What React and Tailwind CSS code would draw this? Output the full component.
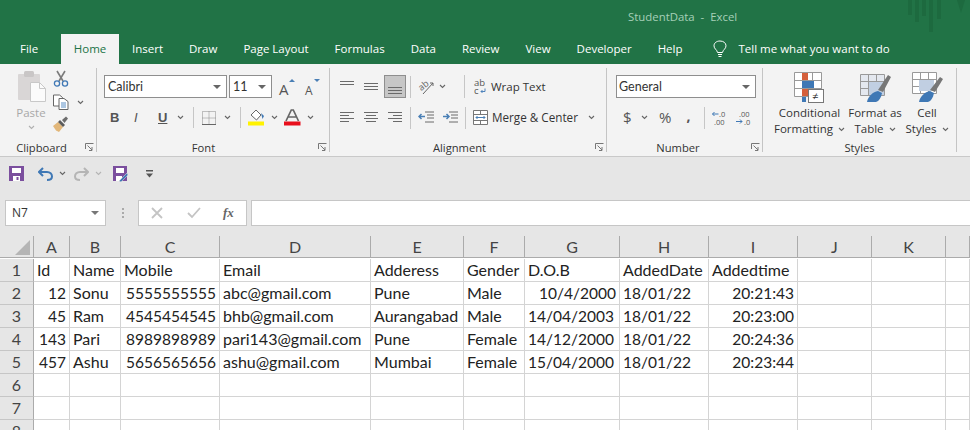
import React from "react";

const Chev = ({ ml = 0, c = "#666" }) => (
  <svg width="7" height="5" viewBox="0 0 7 5" className="shrink-0" style={{ marginLeft: ml }}>
    <path d="M1 1l2.500 2.500L6 1" fill="none" stroke={c} strokeWidth="1.100" />
  </svg>
);
const Sep = ({ ml = 0, h = 23 }) => <div className="w-px bg-[#c6c6c6] shrink-0" style={{ marginLeft: ml, height: h }} />;
const Launcher = () => (
  <svg width="9" height="9" viewBox="0 0 9 9" className="shrink-0">
    <path d="M.5 6V.5H8.500M2.500 2.500L7 7M7 4v3.500H4" fill="none" stroke="#777" strokeWidth="1" />
  </svg>
);
const Lines = ({ rows, w = 14 }) => (
  <svg width={w} height="13" viewBox={`0 0 ${w} 13`} className="shrink-0">
    {rows.map(([x, y, l], i) => <rect key={i} x={x} y={y} width={l} height="1" fill="#6a6a6a" />)}
  </svg>
);
const Dd = ({ className = "" }) => <div className={`w-0 h-0 border-x-[4px] border-x-transparent border-t-[4px] border-t-[#666] ${className}`} />;

function Group({ width, label, labelClass = "justify-center", launcher, children }) {
  return (
    <div className="h-[92px] shrink-0 flex flex-col relative" style={{ width }}>
      <div className="h-[75px] flex flex-col">{children}</div>
      <div className={`flex-1 flex items-center text-[11.2px] leading-none text-[#333] ${labelClass}`}>{label}</div>
      {launcher && <div className="absolute right-[3px] bottom-[4px]"><Launcher /></div>}
      <div className="absolute right-0 top-[4px] w-px h-[84px] bg-[#c4c4c4]" />
    </div>
  );
}

const tabs = ["Insert", "Draw", "Page Layout", "Formulas", "Data", "Review", "View", "Developer", "Help"];

const cols = ["A", "B", "C", "D", "E", "F", "G", "H", "I", "J", "K", ""];
const R = (t) => ({ t, r: true });
const N = (t) => ({ t, n: true });
const data = [
  ["Id", "Name", "Mobile", "Email", "Adderess", "Gender", "D.O.B", "AddedDate", "Addedtime"],
  [R("12"), "Sonu", R("5555555555"), "abc@gmail.com", "Pune", "Male", R("10/4/2000"), N("18/01/22"), R("20:21:43")],
  [R("45"), "Ram", R("4545454545"), "bhb@gmail.com", "Aurangabad", "Male", N("14/04/2003"), N("18/01/22"), R("20:23:00")],
  [R("143"), "Pari", R("8989898989"), "pari143@gmail.com", "Pune", "Female", N("14/12/2000"), N("18/01/22"), R("20:24:36")],
  [R("457"), "Ashu", R("5656565656"), "ashu@gmail.com", "Mumbai", "Female", N("15/04/2000"), N("18/01/22"), R("20:23:44")],
  [], [], [],
];

export default function App() {
  return (
    <div className="w-[970px] h-[430px] overflow-hidden bg-[#e6e6e6] font-['Open_Sans',sans-serif] relative">
      {/* Title bar */}
      <div className="h-[64px] bg-[#217346] relative">
        <div className="h-[34px] pl-[628px] flex items-center text-[11.4px] text-[#a6d0b8] whitespace-pre">StudentData  -  Excel</div>
        <svg width="70" height="34" viewBox="0 0 70 34" className="absolute left-[900px] top-0">
          <g fill="#1d6a3f">
            <rect x="8" width="4" height="15" /><rect x="15" width="4" height="22" /><rect x="22" width="4" height="16" />
            <rect x="29" width="4" height="32" /><rect x="37" width="4" height="19" />
            <path d="M57 0h8l-4 13z" />
          </g>
        </svg>
        <div className="h-[30px] flex items-end text-[11.5px] text-white">
          <div className="h-[30px] flex items-center ml-[20px] w-[41px]">File</div>
          <div className="h-[30px] w-[58px] bg-[#f3f3f3] text-[#217346] flex items-center justify-center">Home</div>
          {tabs.map((t) => (
            <div key={t} className="h-[30px] flex items-center px-[13px]">{t}</div>
          ))}
          <div className="h-[30px] flex items-center ml-[17px] gap-[12px]">
            <svg width="14" height="18" viewBox="0 0 14 18"><path d="M4.500 12.500C4 9.500 1 9 1 5.800 1 3 3.500 1 7 1s6 2 6 4.800c0 3.200-3 3.700-3.500 6.700zM5 14.500h4M5.500 16.500h3" fill="none" stroke="#fff" strokeWidth="1" /></svg>
            <span>Tell me what you want to do</span>
          </div>
        </div>
      </div>

      {/* Ribbon */}
      <div className="h-[93px] bg-[#f3f3f3] border-b border-[#c9c9c9] flex">
        <Group width={97} label={<span className="pr-[14px]">Clipboard</span>} launcher>
          <div className="flex pl-[14px] pt-[6px]">
            <div className="w-[34px] flex flex-col items-center">
              <svg width="32" height="32" viewBox="0 0 32 32">
                <rect x="3" y="4" width="22" height="26" rx="1" fill="#d9d6d6" />
                <rect x="9" y="1" width="10" height="6" rx="1.500" fill="#c9c6c6" />
                <path d="M15.500 12.500h9l6 6v13h-15z" fill="#fbfbfb" stroke="#c8c8c8" />
                <path d="M24.500 12.500v6h6" fill="none" stroke="#c8c8c8" />
              </svg>
              <div className="text-[11.5px] text-[#a8a8a8] leading-none mt-[5px]">Paste</div>
              <div className="mt-[6px]"><Chev c="#b0b0b0" /></div>
            </div>
            <div className="flex flex-col ml-[5px]">
              <svg width="16" height="17" viewBox="0 0 16 17">
                <path d="M4 1l6 10M12 1L6 11" stroke="#7b7b7b" strokeWidth="1.600" fill="none" />
                <circle cx="4" cy="13.500" r="2.600" fill="none" stroke="#3f78b5" strokeWidth="1.300" />
                <circle cx="12" cy="13.500" r="2.600" fill="none" stroke="#3f78b5" strokeWidth="1.300" />
              </svg>
              <div className="flex items-center mt-[7px]">
                <svg width="16" height="16" viewBox="0 0 16 16">
                  <path d="M.5 1h6l3 2.500v8.500h-9z" fill="#fff" stroke="#666" />
                  <path d="M6 4.500h5l4 3v8H6z" fill="#fff" stroke="#666" />
                  <path d="M8 9h5M8 11h5M8 13h5" stroke="#5b8ec4" />
                </svg>
                <Chev ml={8} />
              </div>
              <svg width="17" height="16" viewBox="0 0 17 16" className="mt-[6px] -ml-[1px]">
                <path d="M1 10l5-4 5 5-4 5-3-1.500z" fill="#e2b77a" />
                <path d="M6 6l2-2 5 5-2 2z" fill="#5c5c5c" />
                <path d="M10 4l4-3.500 2 2L12.500 7z" fill="#6d6d6d" />
              </svg>
            </div>
          </div>
        </Group>

        <Group width={233} label={<span className="pr-[20px]">Font</span>} launcher>
          <div className="flex items-center pl-[7px] pt-[11px] font-['Lato',sans-serif] text-[12.5px] text-[#333]">
            <div className="w-[123px] h-[23px] bg-white border border-[#8e8e8e] flex items-center justify-between pt-[1px] pl-[3px] pr-[5px]">Calibri<Dd /></div>
            <div className="w-[43px] h-[23px] ml-[2px] bg-white border border-[#8e8e8e] flex items-center justify-between pt-[1px] pl-[3px] pr-[5px]">11<Dd /></div>
            <svg width="16" height="17" viewBox="0 0 16 17" className="ml-[7px] mt-[1px] overflow-visible"><text x="0" y="16" fontSize="15" fill="#555" fontFamily="Open Sans">A</text><path d="M10 3l3-3 3 3z" fill="#4a7fb5" /></svg>
            <svg width="16" height="17" viewBox="0 0 16 17" className="ml-[10px] mt-[1px] overflow-visible"><text x="0" y="16" fontSize="12" fill="#555" fontFamily="Open Sans">A</text><path d="M9 0h6l-3 3z" fill="#4a7fb5" /></svg>
          </div>
          <div className="flex items-center pl-[13px] mt-[8px] h-[23px] text-[#555] text-[13px] font-['Liberation_Sans',sans-serif]">
            <span className="font-bold w-[10px]">B</span>
            <span className="italic ml-[14px] w-[8px]">I</span>
            <span className="underline ml-[16px] w-[10px] font-bold">U</span>
            <Chev ml={9} />
            <Sep ml={9} h={21} />
            <svg width="14" height="14" viewBox="0 0 14 14" className="ml-[8px]">
              <path d="M.5.5h13v13H.5zM7 .5v13M.5 7h13" fill="none" stroke="#888" strokeDasharray="1 1" />
              <path d="M0 13.500h14" stroke="#666" />
            </svg>
            <Chev ml={8} />
            <Sep ml={9} h={21} />
            <svg width="17" height="17" viewBox="0 0 17 17" className="ml-[7px]">
              <path d="M3 6l5-5 5 5-4.500 5z" fill="#fff" stroke="#666" />
              <path d="M13 4l3 3-1.500 3z" fill="#3f78b5" />
              <rect x="0" y="12.500" width="16" height="4" fill="#fff200" />
            </svg>
            <Chev ml={6} />
            <svg width="17" height="17" viewBox="0 0 17 17" className="ml-[6px]">
              <path d="M2 12L7.300 1h2L14.500 12M4.500 8h7.500" fill="none" stroke="#666" strokeWidth="1.700" />
              <rect x="0" y="12.500" width="16.500" height="4" fill="#e80f1c" />
            </svg>
            <Chev ml={6} />
          </div>
        </Group>

        <Group width={277} label={<span className="pr-[18px]">Alignment</span>} launcher>
          <div className="flex items-center pl-[10px] pt-[11px] h-[34px] text-[#333]">
            <Lines rows={[[0, 1, 14], [0, 4, 14]]} />
            <div className="ml-[10px]"><Lines rows={[[0, 3, 14], [0, 6, 14], [0, 9, 14]]} /></div>
            <div className="ml-[6px] w-[22px] h-[23px] bg-[#c6c6c6] border border-[#8e8e8e] flex items-end justify-center pb-[1px]">
              <Lines rows={[[0, 4, 14], [0, 7, 14], [0, 10, 14]]} />
            </div>
            <Sep ml={4} h={22} />
            <svg width="16" height="16" viewBox="0 0 16 16" className="ml-[7px] overflow-visible">
              <text x="0" y="9" fontSize="9" fill="#666" transform="rotate(-40 6 6)" fontFamily="Open Sans">ab</text>
              <path d="M5 15L15 4M15 4h-3M15 4v3" stroke="#666" fill="none" />
            </svg>
            <Chev ml={5} />
            <Sep ml={18} h={23} />
            <svg width="14" height="15" viewBox="0 0 14 15" className="ml-[9px] overflow-visible">
              <text x="0" y="7" fontSize="9.500" fill="#555" fontFamily="Open Sans">ab</text>
              <text x="0" y="14.500" fontSize="9.500" fill="#555" fontFamily="Open Sans">c</text>
              <path d="M11 9.500v3H7M8.500 11L7 12.500 8.500 14" fill="none" stroke="#3f78b5" strokeWidth=".9" />
            </svg>
            <span className="ml-[3px] text-[11.5px]">Wrap Text</span>
          </div>
          <div className="flex items-center pl-[10px] mt-[8px] h-[23px] text-[#333]">
            <Lines rows={[[0, 1, 14], [0, 4, 9], [0, 7, 14], [0, 10, 9]]} />
            <div className="ml-[10px]"><Lines rows={[[0, 1, 14], [2, 4, 10], [0, 7, 14], [2, 10, 10]]} /></div>
            <div className="ml-[10px]"><Lines rows={[[0, 1, 14], [5, 4, 9], [0, 7, 14], [5, 10, 9]]} /></div>
            <Sep ml={8} h={22} />
            <svg width="16" height="13" viewBox="0 0 16 13" className="ml-[7px]">
              <path d="M7 1h9M9 4h7M9 7h7M7 11h9" stroke="#6a6a6a" /><path d="M7 5.500H1M3.500 3L1 5.500 3.500 8" stroke="#4a7fb5" strokeWidth="1.500" fill="none" />
            </svg>
            <svg width="16" height="13" viewBox="0 0 16 13" className="ml-[8px]">
              <path d="M7 1h9M9 4h7M9 7h7M7 11h9" stroke="#6a6a6a" /><path d="M1 5.500h6M4.500 3L7 5.500 4.500 8" stroke="#4a7fb5" strokeWidth="1.500" fill="none" />
            </svg>
            <Sep ml={7} h={22} />
            <svg width="15" height="15" viewBox="0 0 15 15" className="ml-[7px]">
              <path d="M.5.5h14v14H.5zM.5 4.500h14M.5 10.500h14M7.500.5v4M7.500 10.500v4" fill="#fff" stroke="#777" />
              <path d="M3 7.500h9M4.500 6L3 7.500 4.500 9M10.500 6L12 7.500 10.500 9" fill="none" stroke="#4a7fb5" />
            </svg>
            <span className="ml-[4px] text-[11.7px]">Merge &amp; Center</span>
            <Chev ml={10} />
          </div>
        </Group>

        <Group width={156} label={<span className="pr-[14px]">Number</span>} launcher>
          <div className="pl-[9px] pt-[11px] flex h-[34px]">
            <div className="w-[140px] h-[23px] bg-white border border-[#8e8e8e] flex items-center justify-between pt-[1px] pl-[2px] pr-[5px] font-['Lato',sans-serif] text-[12.5px] text-[#333]">General<Dd /></div>
          </div>
          <div className="flex items-center pl-[16px] mt-[8px] h-[23px] text-[#555]">
            <span className="text-[15px] w-[9px]">$</span>
            <Chev ml={9} />
            <span className="text-[15px] ml-[11px]">%</span>
            <span className="text-[14px] font-bold ml-[15px] w-[6px] -mt-[4px]">,</span>
            <Sep ml={12} h={22} />
            <svg width="15" height="14" viewBox="0 0 15 14" className="ml-[7px] overflow-visible">
              <path d="M6 3H0M2 1L0 3l2 2" stroke="#3f78b5" fill="none" transform="translate(.5 0)" />
              <text x="7" y="6" fontSize="7.500" fill="#555" fontFamily="Open Sans">.0</text>
              <text x="2" y="13.500" fontSize="7.500" fill="#555" fontFamily="Open Sans">.00</text>
            </svg>
            <svg width="15" height="14" viewBox="0 0 15 14" className="ml-[9px] overflow-visible">
              <text x="3" y="6" fontSize="7.500" fill="#555" fontFamily="Open Sans">.00</text>
              <path d="M0 10.500h6M4 8.500l2 2-2 2" stroke="#3f78b5" fill="none" />
              <text x="8" y="13.500" fontSize="7.500" fill="#555" fontFamily="Open Sans">.0</text>
            </svg>
          </div>
        </Group>

        <Group width={194} label={<span className="pr-[1px]">Styles</span>}>
          <div className="flex pt-[8px] text-[11.5px] leading-[16px] text-[#333] text-center">
            <div className="w-[93px] flex flex-col items-center">
              <svg width="31" height="31" viewBox="0 0 31 31">
                <path d="M.5.5h27v24H.5zM.5 8.500h27M.5 16.500h27M9.500.5v24M18.500.5v24" fill="#fff" stroke="#999" />
                <rect x="8" y="1" width="6" height="7" fill="#d5603c" />
                <rect x="8" y="9" width="12" height="7" fill="#3f78b5" />
                <rect x="8" y="17" width="9" height="7" fill="#d5603c" />
                <rect x="8" y="25" width="4" height="5" fill="#3f78b5" />
                <rect x="14.500" y="17.500" width="15" height="13" fill="#fff" stroke="#777" />
                <text x="18" y="28" fontSize="11" fill="#333" fontFamily="Open Sans">≠</text>
              </svg>
              <div className="mt-[2px]">Conditional</div>
              <div className="flex items-center justify-center">Formatting<Chev ml={5} /></div>
            </div>
            <div className="w-[54px] -ml-[8px] flex flex-col items-center">
              <svg width="31" height="31" viewBox="0 0 31 31">
                <path d="M.5 2.500h24v21H.5zM.5 9.500h24M.5 16.500h24M8.500 2.500v21M16.500 2.500v21" fill="#e4e8ef" stroke="#999" />
                <rect x="9" y="10" width="15" height="13" fill="#c1cfe2" />
                <path d="M18 18L28 3l3 2-8 15z" fill="#777" />
                <path d="M7 30c1-6 6-10 11-11l4 2c-1 5-3 8-6 9z" fill="#3f78b5" />
              </svg>
              <div className="mt-[2px] whitespace-nowrap">Format as</div>
              <div className="flex items-center justify-center whitespace-nowrap">Table<Chev ml={5} /></div>
            </div>
            <div className="w-[48px] ml-[1px] flex flex-col items-center">
              <svg width="31" height="31" viewBox="0 0 31 31">
                <path d="M.5.5h24v21H.5zM.5 7.500h24M.5 14.500h24M8.500.5v21M16.500.5v21" fill="#fff" stroke="#999" />
                <rect x="7" y="8" width="15" height="11" fill="#c1cfe2" />
                <path d="M18 18L28 5l3 2-8 13z" fill="#777" />
                <path d="M7 30c1-6 6-10 11-11l4 2c-1 5-3 8-6 9z" fill="#3f78b5" />
              </svg>
              <div className="mt-[2px]">Cell</div>
              <div className="flex items-center justify-center">Styles<Chev ml={5} /></div>
            </div>
          </div>
        </Group>
      </div>

      {/* Quick access */}
      <div className="h-[33px] flex items-center pl-[9px] bg-[#e6e6e6]">
        <svg width="15" height="15" viewBox="0 0 15 15">
          <path d="M0 0h15v15H0z" fill="#7b4f9e" /><rect x="3" y="2" width="9" height="5" fill="#fff" /><rect x="4" y="10" width="7" height="5" fill="#fff" /><rect x="7.500" y="11" width="2" height="3" fill="#7b4f9e" />
        </svg>
        <svg width="15" height="14" viewBox="0 0 15 14" className="ml-[14px]">
          <path d="M5 1L1 5l4 4" fill="none" stroke="#3f78b5" strokeWidth="2" /><path d="M1 5h8c3 0 5 2 5 4.500S12 13 9 13" fill="none" stroke="#3f78b5" strokeWidth="2" />
        </svg>
        <Chev ml={6} />
        <svg width="15" height="14" viewBox="0 0 15 14" className="ml-[8px]">
          <path d="M10 1l4 4-4 4" fill="none" stroke="#b5b5b5" strokeWidth="2" /><path d="M14 5H6C3 5 1 7 1 9.500S3 13 6 13" fill="none" stroke="#b5b5b5" strokeWidth="2" />
        </svg>
        <Chev ml={6} c="#b5b5b5" />
        <svg width="15" height="16" viewBox="0 0 15 16" className="ml-[11px]">
          <path d="M0 0h14v15H0z" fill="#7b4f9e" /><rect x="3" y="2" width="8" height="5" fill="#fff" /><rect x="3" y="10" width="6" height="5" fill="#fff" />
          <path d="M6 15l8-8 1 2-7 7z" fill="#3f78b5" stroke="#e6e6e6" strokeWidth=".5" />
        </svg>
        <svg width="7" height="8" viewBox="0 0 7 8" className="ml-[18px]"><path d="M0 0h7v1.500H0z" fill="#555" /><path d="M0 3.500h7L3.500 7.500z" fill="#555" /></svg>
      </div>

      {/* Formula bar */}
      <div className="h-[26px] mt-[10px] flex bg-[#e6e6e6]">
        <div className="w-[101px] ml-[5px] bg-white border border-[#c6c6c6] flex items-center justify-between pl-[6px] pr-[6px] text-[12px] text-[#333]">N7<Dd className="border-t-[#777]" /></div>
        <div className="w-[32px] flex items-center justify-center">
          <svg width="3" height="11" viewBox="0 0 3 11"><path d="M1 0h2v2H1zM1 4h2v2H1zM1 8h2v2H1z" fill="#aaa" /></svg>
        </div>
        <div className="w-[109px] bg-white border border-[#c6c6c6] flex items-center pl-[12px]">
          <svg width="12" height="12" viewBox="0 0 12 12"><path d="M1 1l10 10M11 1L1 11" stroke="#c4c4c4" strokeWidth="1.800" /></svg>
          <svg width="14" height="12" viewBox="0 0 14 12" className="ml-[24px]"><path d="M1 6l4 4 8-9" stroke="#c4c4c4" strokeWidth="1.800" fill="none" /></svg>
          <span className="ml-[22px] text-[13px] italic font-bold text-[#666] font-['Liberation_Serif',serif]">fx</span>
        </div>
        <div className="flex-1 ml-[4px] bg-white border-y border-l border-[#c6c6c6]" />
      </div>

      {/* Sheet */}
      <div className="mt-[10px] h-[194px] overflow-hidden grid grid-cols-[34px_36px_51px_99px_151px_93px_61px_95px_89px_89px_74px_74px_1fr] auto-rows-[23px] bg-white font-['Lato',sans-serif] text-[16px] text-[#222] leading-none">
        <div className="h-[22px] bg-[#e6e6e6] border-r border-b border-[#ababab] flex items-end justify-end pr-[3px] pb-[2px]">
          <svg width="15" height="15" viewBox="0 0 15 15"><path d="M15 0v15H0z" fill="#b5b5b5" /></svg>
        </div>
        {cols.map((c, i) => (
          <div key={i} className="h-[22px] bg-[#e6e6e6] border-r border-b border-[#ababab] flex items-center justify-center text-[#444]">{c}</div>
        ))}
        {data.map((row, ri) => (
          <React.Fragment key={ri}>
            <div className="bg-[#e6e6e6] border-r border-b border-r-[#ababab] border-b-[#c6c6c6] flex items-center justify-center text-[#444]">{ri + 1}</div>
            {cols.map((_, ci) => {
              const v = row[ci];
              const right = v && v.r;
              const num = v && (v.r || v.n);
              return (
                <div key={ci} className={`border-r border-b border-[#d4d4d4] flex items-center whitespace-nowrap ${num ? "text-[15.5px] pt-[1px]" : ""} ${right ? "justify-end pr-[3px]" : "pl-[3px]"}`}>
                  {num ? v.t : v}
                </div>
              );
            })}
          </React.Fragment>
        ))}
      </div>
    </div>
  );
}
